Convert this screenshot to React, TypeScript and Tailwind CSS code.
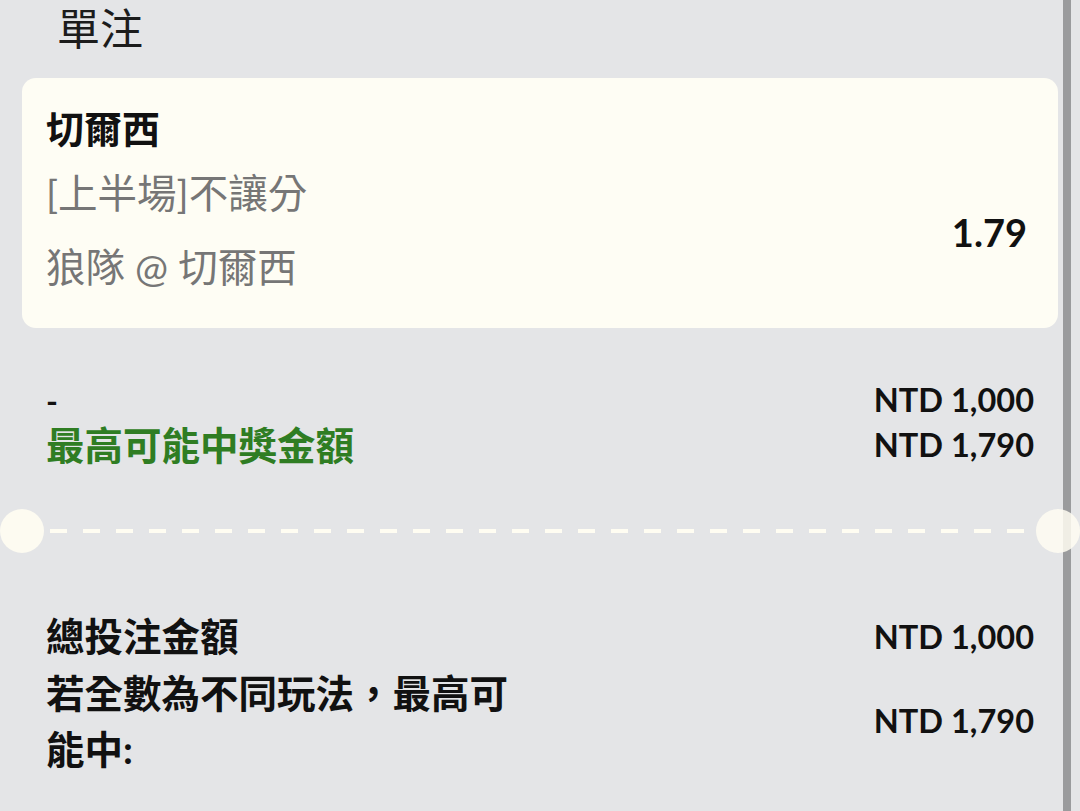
export default function App() {
  const font = "font-['Lato','Noto_Sans_CJK_TC',sans-serif]";

  return (
    <div className={`relative w-[1080px] h-[811px] overflow-hidden bg-[#e4e5e7] text-[#111] ${font}`}>
      {/* right scroll rail */}
      <div className="absolute top-0 right-[9px] w-[8px] h-full bg-[#9a9b9d]" />

      {/* Title */}
      <div className="pl-[57px] text-[43px] leading-[52px] text-[#1c1c1c] font-['Noto_Sans_CJK_TC',sans-serif]">
        單注
      </div>

      {/* Selection card */}
      <div className="mt-[26px] mx-[22px] rounded-[14px] bg-[#fefdf4] pl-6 pr-[31px] pt-[20px] pb-[22px]">
        <div className="text-[38px] leading-[60px] font-bold">切爾西</div>
        <div className="flex items-center justify-between">
          <div className="text-[39.5px] text-[#767676]">
            <div className="leading-[70px]">[上半場]不讓分</div>
            <div className="leading-[78px]">狼隊 @ 切爾西</div>
          </div>
          <div className="text-[38px] font-bold">1.79</div>
        </div>
      </div>

      {/* Stake / potential win */}
      <div className="mt-[50px] px-[46px]">
        <div className="flex items-center justify-between h-[45px]">
          <span className="text-[32px] font-bold">-</span>
          <span className="text-[32.5px] font-bold">NTD 1,000</span>
        </div>
        <div className="flex items-center justify-between h-[45px]">
          <span className="text-[38.5px] font-bold text-[#2f7d23]">最高可能中獎金額</span>
          <span className="text-[32.5px] font-bold">NTD 1,790</span>
        </div>
      </div>

      {/* Perforation */}
      <div className="relative z-10 mt-[41px] flex items-center h-[44px]">
        <div className="w-[44px] h-[44px] rounded-full bg-[#fffdf2] opacity-90" />
        <div className="flex-1 mx-[6px] h-[4px] bg-[repeating-linear-gradient(to_right,#fffdf2_0_17px,transparent_17px_33px)]" />
        <div className="w-[44px] h-[44px] rounded-full bg-[#fffdf2] opacity-85" />
      </div>

      {/* Totals */}
      <div className="mt-[56px] px-[46px]">
        <div className="flex items-center justify-between h-[56px]">
          <span className="text-[38.5px] font-bold">總投注金額</span>
          <span className="text-[32.5px] font-bold">NTD 1,000</span>
        </div>
        <div className="flex items-center justify-between">
          <span className="w-[490px] text-[38.5px] leading-[56px] font-bold">若全數為不同玩法，最高可能中:</span>
          <span className="text-[32.5px] font-bold">NTD 1,790</span>
        </div>
      </div>
    </div>
  );
}
